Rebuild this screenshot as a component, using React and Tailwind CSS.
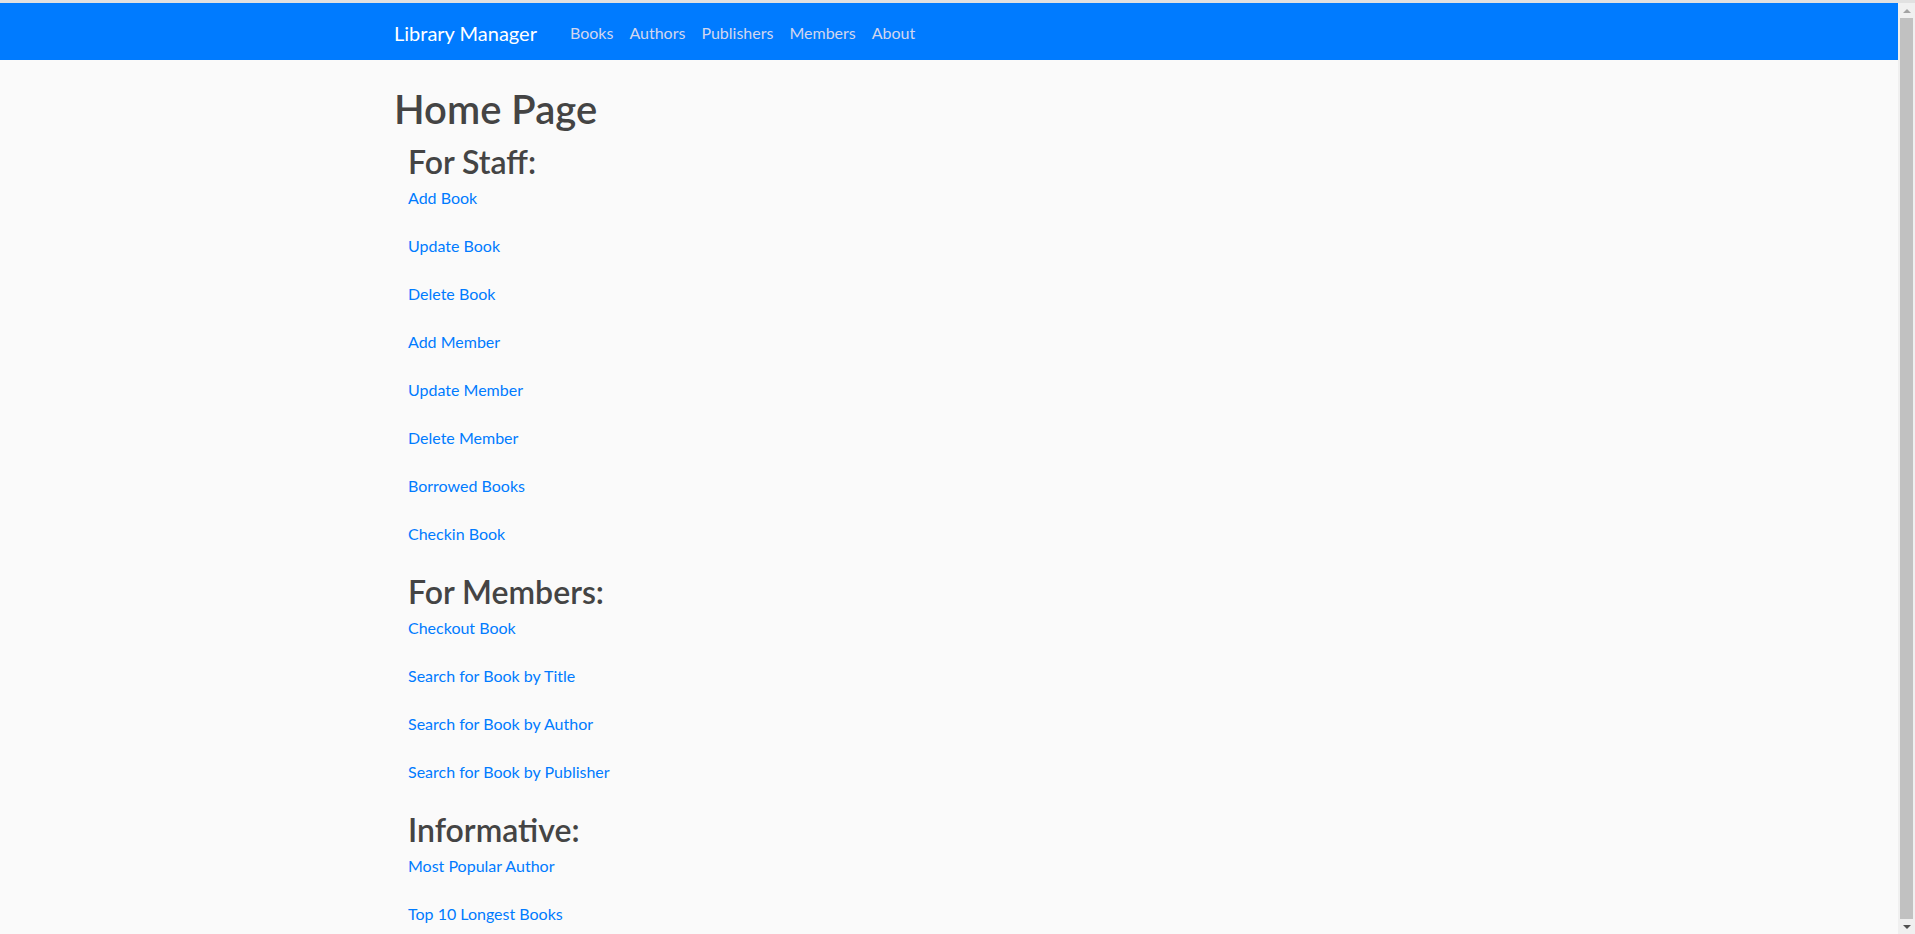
import React from 'react';

const navLinks = ['Books', 'Authors', 'Publishers', 'Members', 'About'];

const sections = [
    {
        title: 'For Staff:',
        links: ['Add Book', 'Update Book', 'Delete Book', 'Add Member', 'Update Member', 'Delete Member', 'Borrowed Books', 'Checkin Book'],
    },
    {
        title: 'For Members:',
        links: ['Checkout Book', 'Search for Book by Title', 'Search for Book by Author', 'Search for Book by Publisher'],
    },
    {
        title: 'Informative:',
        links: ['Most Popular Author', 'Top 10 Longest Books'],
    },
];

export default function App() {
    return (
        <div className="h-[934px] flex flex-col overflow-hidden bg-[#fafafa] font-['Lato',sans-serif]">
            <div className="h-[3px] bg-[#e1e1e1] shrink-0" />
            <div className="flex flex-1 min-h-0">
                <div className="flex-1 min-w-0 flex flex-col">
                    {/* Navbar */}
                    <nav className="h-[57px] bg-[#007bff] shrink-0 py-2">
                        <div className="max-w-[1140px] mx-auto px-[15px] h-full flex items-center">
                            <a href="#" className="text-[20px] leading-[30px] pt-[6px] pb-[4px] text-white mr-[25px]">Library Manager</a>
                            <div className="flex">
                                {navLinks.map((l) => (
                                    <a key={l} href="#" className="px-2 pt-[9px] pb-[7px] text-[16px] leading-[24px] text-[#d2d6ee]">{l}</a>
                                ))}
                            </div>
                        </div>
                    </nav>

                    {/* Content */}
                    <main className="max-w-[1140px] w-full mx-auto px-[15px] pt-[25px] text-[#444444]">
                        <h1 className="text-[40px] leading-[48px] font-semibold mb-[7px]">Home Page</h1>
                        {sections.map((s) => (
                            <section key={s.title} className="pl-[14px]">
                                <h2 className="text-[32px] leading-[38px] font-semibold pt-[3px] mb-[5px]">{s.title}</h2>
                                <div className="flex flex-col items-start">
                                    {s.links.map((l) => (
                                        <a key={l} href="#" className="text-[16px] leading-[24px] mb-6 text-[#007bff]">{l}</a>
                                    ))}
                                </div>
                            </section>
                        ))}
                    </main>
                </div>

                {/* Scrollbar */}
                <div className="w-[17px] bg-[#f0f0f0] flex flex-col items-center shrink-0">
                    <div className="h-[15px] flex items-center justify-center">
                        <div className="w-0 h-0 border-l-[4px] border-r-[4px] border-b-[4px] border-l-transparent border-r-transparent border-b-[#a3a3a3]" />
                    </div>
                    <div className="w-[13px] flex-1 bg-[#c1c1c1]" />
                    <div className="h-[15px] flex items-center justify-center">
                        <div className="w-0 h-0 border-l-[4px] border-r-[4px] border-t-[4px] border-l-transparent border-r-transparent border-t-[#505050]" />
                    </div>
                </div>
            </div>
        </div>
    );
}
